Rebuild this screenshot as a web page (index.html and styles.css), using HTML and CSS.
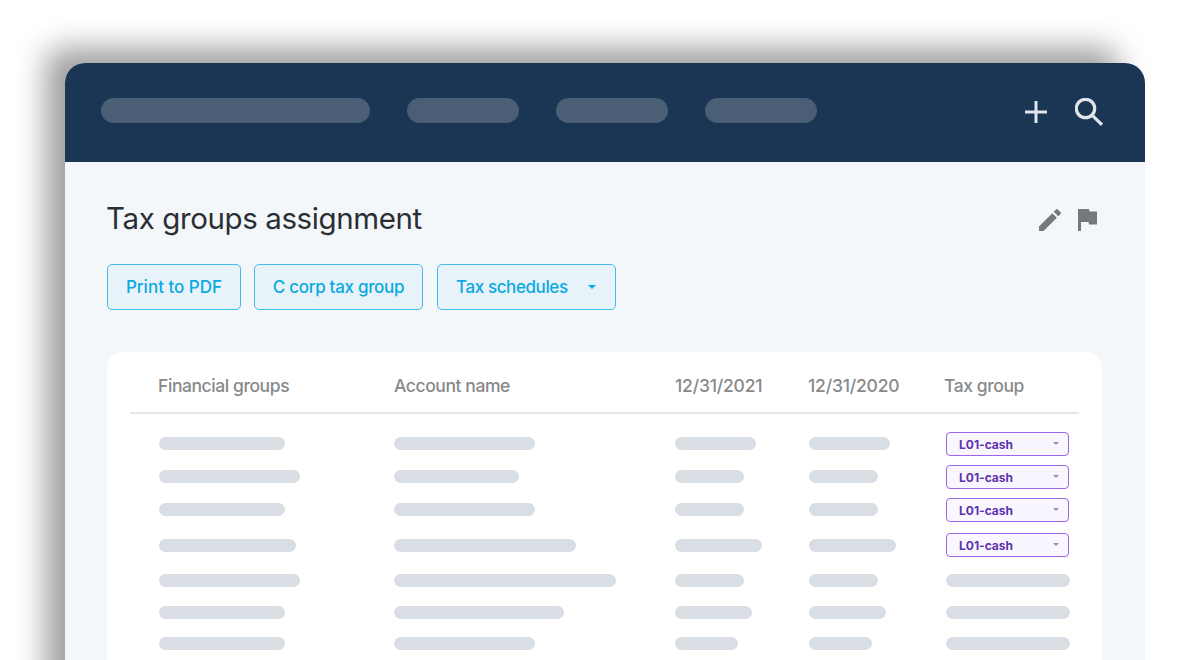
FILE: index.html
```html
<!DOCTYPE html>
<html lang="en">
<head>
<meta charset="utf-8">
<title>Tax groups assignment</title>
<link rel="stylesheet" href="styles.css">
</head>
<body>
<div class="stage">
<div class="window">
  <header class="nav">
    <div class="nav-links">
      <span class="nav-pill nav-pill-wide"></span>
      <span class="nav-pill"></span>
      <span class="nav-pill"></span>
      <span class="nav-pill"></span>
    </div>
    <div class="nav-actions">
      <svg class="icon-plus" viewBox="0 0 22 22"><path d="M11 0v22M0 11h22"/></svg>
      <svg class="icon-search" viewBox="0 0 28 28"><circle cx="10.500" cy="10.500" r="9.200"/><path d="M17.300 17.300L27 26.800"/></svg>
    </div>
  </header>
  <main class="content">
    <div class="title-row">
      <h1 class="title">Tax groups assignment</h1>
      <div class="title-actions">
        <svg class="icon-pencil" viewBox="0 0 24 24"><path d="M0 24v-5L14.500 4.500l5 5L5 24zM16 3l2.300-2.300a1.700 1.700 0 0 1 2.400 0l2.600 2.600a1.700 1.700 0 0 1 0 2.400L21 8z"/></svg>
        <svg class="icon-flag" viewBox="0 0 19 22"><path d="M0 0H11L11.500 2.500H19V15.500H11L10.500 13H3V22H0Z"/></svg>
      </div>
    </div>
    <div class="toolbar">
      <button class="btn btn-print">Print to PDF</button>
      <button class="btn btn-corp">C corp tax group</button>
      <button class="btn btn-menu">Tax schedules<span class="caret"></span></button>
    </div>
    <section class="card">
      <div class="table-head">
        <span>Financial groups</span>
        <span>Account name</span>
        <span class="date">12/31/2021</span>
        <span class="date">12/31/2020</span>
        <span>Tax group</span>
      </div>
      <div class="table-body">
        <span class="bar" style="width:126px"></span><span class="bar" style="width:141px"></span><span class="bar" style="width:81px"></span><span class="bar" style="width:81px"></span>
        <div class="tag">L01-cash<span class="tag-caret"></span></div>

        <span class="bar" style="width:141px"></span><span class="bar" style="width:125px"></span><span class="bar" style="width:69px"></span><span class="bar" style="width:69px"></span>
        <div class="tag">L01-cash<span class="tag-caret"></span></div>

        <span class="bar" style="width:126px"></span><span class="bar" style="width:141px"></span><span class="bar" style="width:69px"></span><span class="bar" style="width:69px"></span>
        <div class="tag">L01-cash<span class="tag-caret"></span></div>

        <span class="bar" style="width:137px"></span><span class="bar" style="width:182px"></span><span class="bar" style="width:87px"></span><span class="bar" style="width:87px"></span>
        <div class="tag tag-raised">L01-cash<span class="tag-caret"></span></div>

        <span class="bar" style="width:141px"></span><span class="bar" style="width:222px"></span><span class="bar" style="width:69px"></span><span class="bar" style="width:69px"></span><span class="bar" style="width:124px"></span>

        <span class="bar" style="width:126px"></span><span class="bar" style="width:170px"></span><span class="bar" style="width:77px"></span><span class="bar" style="width:77px"></span><span class="bar" style="width:124px"></span>

        <span class="bar" style="width:126px"></span><span class="bar" style="width:141px"></span><span class="bar" style="width:63px"></span><span class="bar" style="width:63px"></span><span class="bar" style="width:124px"></span>
      </div>
    </section>
  </main>
</div>
</div>
</body>
</html>
```
FILE: styles.css
```css
* { box-sizing: border-box; }
html, body { margin: 0; background: #fff; }
body { font-family: Inter, "Liberation Sans", sans-serif; }

.stage { height: 660px; overflow: hidden; padding: 63px 55px 0 65px; }

.window {
  height: 700px;
  overflow: hidden;
  display: flex;
  flex-direction: column;
  border-radius: 20px 20px 0 0;
  background: #f3f7fa;
  box-shadow: -23px -19px 30px -4px rgba(0, 0, 0, .38);
}

.nav {
  height: 99px;
  flex: none;
  display: flex;
  align-items: center;
  justify-content: space-between;
  padding: 0 42px 0 36px;
  background: #1b3654;
}
.nav-links { display: flex; gap: 37px; margin-top: -4px; }
.nav-pill { width: 112px; height: 25px; border-radius: 13px; background: #4a5f76; }
.nav-pill-wide { width: 269px; }
.nav-actions { display: flex; align-items: center; gap: 28px; margin-top: -1px; }
.icon-plus { width: 22px; height: 22px; fill: none; stroke: #e1e4ea; stroke-width: 3; }
.icon-search { width: 28px; height: 28px; fill: none; stroke: #e1e4ea; stroke-width: 3.200; }

.content { padding: 0 43px 0 42px; }
.title-row { height: 102px; display: flex; align-items: center; justify-content: space-between; padding-right: 5px; padding-top: 12px; }
.title { margin: 0 0 2px -1px; font-size: 29.500px; font-weight: 400; letter-spacing: -.4px; color: #2b2f33; }
.title-actions { display: flex; align-items: center; gap: 17px; margin-top: 2px; }
.icon-pencil { width: 22px; height: 22px; fill: #74797b; }
.icon-flag { width: 19px; height: 22px; fill: #74797b; }

.toolbar { display: flex; gap: 13px; }
.btn {
  height: 46px;
  padding: 0;
  font: 500 17px Inter, "Liberation Sans", sans-serif;
  letter-spacing: -.3px;
  color: #0aa9e3;
  background: #e7f3f9;
  border: 1px solid #40bdea;
  border-radius: 5px;
}
.btn-print { width: 134px; letter-spacing: 0; }
.btn-corp { width: 169px; }
.btn-menu {
  width: 179px;
  margin-left: 1px;
  padding: 0 19px 0 18px;
  letter-spacing: -.4px;
  display: flex;
  align-items: center;
  justify-content: space-between;
}
.caret { width: 0; height: 0; border: 4.500px solid transparent; border-top-color: #0aa9e3; border-bottom: 0; }

.card { height: 340px; flex: none; margin-top: 42px; padding: 0 23px; background: #fff; border-radius: 16px; }
.table-head {
  display: grid;
  grid-template-columns: 236px 281px 133px 137px 133px;
  padding: 6px 0 0 28px;
  height: 62px;
  align-items: center;
  font-size: 17.500px;
  font-weight: 500;
  letter-spacing: -.42px;
  color: #87898b;
  border-bottom: 2px solid #e4e6e9;
}
.date { letter-spacing: -.2px; }
.table-head span:last-child { margin-left: -1px; }
.table-body {
  display: grid;
  grid-template-columns: 235px 281px 134px 137px 133px;
  grid-template-rows: 33px 33px 33px 39px 31px 33px 29px;
  align-items: center;
  padding: 13px 0 0 29px;
}
.bar { height: 13px; border-radius: 7px; background: #d9dde4; }
.tag {
  width: 123px;
  height: 24px;
  display: flex;
  align-items: center;
  justify-content: space-between;
  padding: 1px 9px 0 12px;
  font-size: 12px;
  font-weight: 700;
  color: #5a32ae;
  background: #faf6ff;
  border: 1.500px solid #9c65ee;
  border-radius: 4px;
}
.tag-raised { margin-bottom: 2px; }
.tag-caret { width: 0; height: 0; border: 3px solid transparent; border-top-color: #9a8bb8; border-bottom: 0; margin-top: -2px; }
```
